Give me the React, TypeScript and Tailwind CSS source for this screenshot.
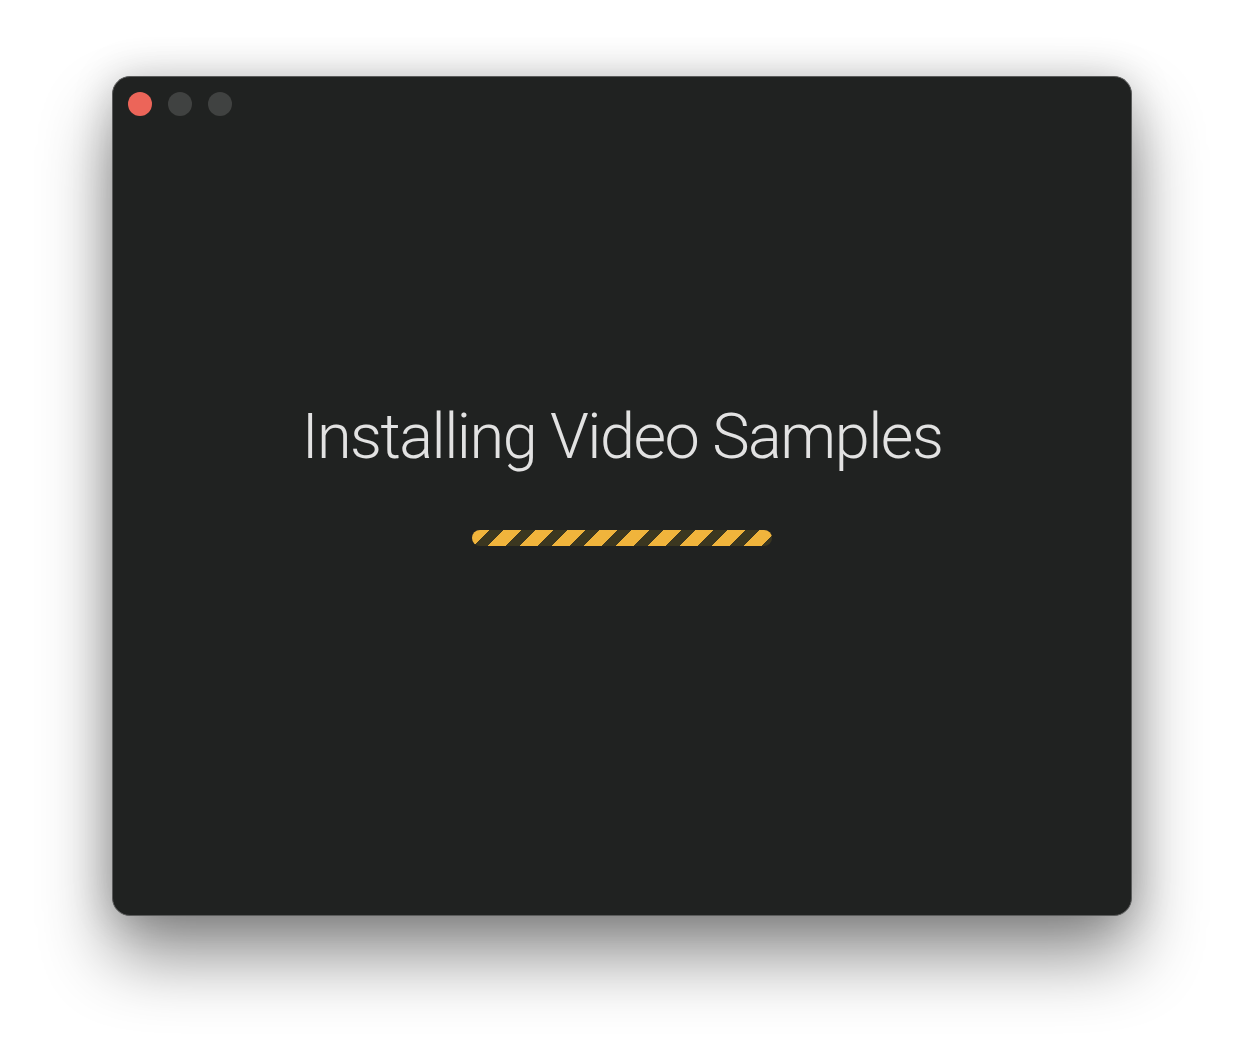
export default function App() {
  return (
    <div className="min-h-[1064px] bg-white flex justify-center pt-[76px]" style={{ fontFamily: "Inter, 'Noto Sans', sans-serif" }}>
      <div className="w-[1020px] h-[840px] rounded-[18px] bg-[#202221] border border-[#5b5c5c] shadow-[0_40px_70px_rgba(0,0,0,0.45),0_0_40px_rgba(0,0,0,0.18)] flex flex-col">
        <div className="flex gap-4 pl-[15px] pt-[15px]">
          <span className="w-6 h-6 rounded-full bg-[#ec6559]" />
          <span className="w-6 h-6 rounded-full bg-[#404241]" />
          <span className="w-6 h-6 rounded-full bg-[#404241]" />
        </div>
        <div className="flex flex-col items-center pt-[289px]">
          <h1 className="text-[63px] leading-none font-light text-[#e2e2e2] tracking-[-1.5px]" style={{ fontFamily: "Roboto, sans-serif" }}>
            Installing Video Samples
          </h1>
          <div className="mt-[62px] w-[300px] h-4 rounded-full bg-[repeating-linear-gradient(135deg,#f0b43c_0px,#f0b43c_12.5px,#3b3720_12.5px,#3b3720_22.6px)]" />
        </div>
      </div>
    </div>
  )
}
